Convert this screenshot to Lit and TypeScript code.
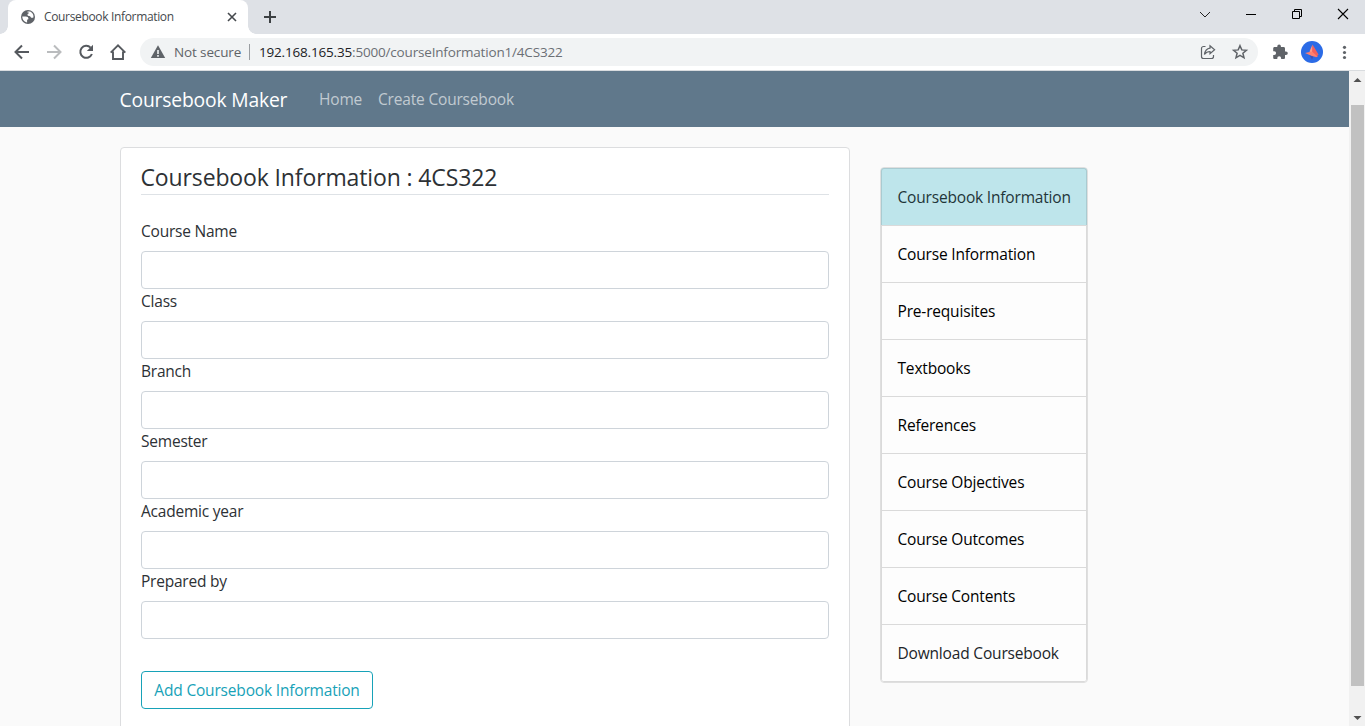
import { LitElement, html, css, svg } from "lit";
import { customElement } from "lit/decorators.js";
import { classMap } from "lit/directives/class-map.js";

const FIELDS = ["Course Name", "Class", "Branch", "Semester", "Academic year", "Prepared by"];
const SECTIONS = [
  "Coursebook Information",
  "Course Information",
  "Pre-requisites",
  "Textbooks",
  "References",
  "Course Objectives",
  "Course Outcomes",
  "Course Contents",
  "Download Coursebook",
];

const icon = (size: number, body: unknown, box = 24) =>
  html`<svg width=${size} height=${size} viewBox="0 0 ${box} ${box}">${body}</svg>`;

@customElement("browser-bar")
class BrowserBar extends LitElement {
  static styles = css`
    :host { display: block; color: #5f6368; font-family: "Open Sans", "Noto Sans", sans-serif; font-weight: 400; }
    svg { display: block; flex: none; }
    .strip { height: 34px; background: #dee1e6; display: flex; }
    .tab { position: relative; width: 240px; margin-left: 8px; background: #fff; border-radius: 8px 8px 0 0; display: flex; align-items: center; box-sizing: border-box; padding: 0 8px 0 12px; }
    .tab::before, .tab::after { content: ""; position: absolute; bottom: 0; width: 8px; height: 8px; }
    .tab::before { left: -8px; background: radial-gradient(circle at 0 0, transparent 7.5px, #fff 8px); }
    .tab::after { right: -8px; background: radial-gradient(circle at 100% 0, transparent 7.5px, #fff 8px); }
    .title { margin-left: 8px; flex: 1; font-size: 12px; color: #45494d; line-height: 34px; white-space: nowrap; letter-spacing: -0.34px; }
    .new { margin: 8px 0 0 13px; }
    .window { margin-left: auto; display: flex; height: 28px; align-items: center; margin-right: -1px; }
    .window svg { width: 46px; }
    .tools { height: 36px; background: #fff; display: flex; align-items: center; border-bottom: 1px solid #d9dcdf; }
    .nav { display: flex; gap: 12px; padding: 0 12px; }
    .address { height: 28px; flex: 1; background: #f1f3f4; border-radius: 14px; display: flex; align-items: center; font-size: 13.5px; white-space: nowrap; padding: 0 8px 0 8px; }
    .insecure { margin-left: 6px; width: 75px; letter-spacing: -0.13px; }
    .url { border-left: 1px solid #9a9da1; height: 16px; line-height: 16px; padding-left: 9px; flex: 1; color: #6b6f74; letter-spacing: -0.18px; }
    .host { color: #202124; }
    .share { margin-right: 12px; }
    .right { display: flex; align-items: center; padding: 0 11px 0 12px; }
    .avatar { margin: 0 11px 0 11px; }
  `;
  render() {
    return html`
      <div class="strip">
        <div class="tab">
          ${icon(16, svg`<circle cx="8" cy="8" r="7" fill="#5f6368"/><path d="M2.300 7.600h3.500c1.600 0 2.600.8 2.600 1.900 0 .8-.5 1.200-1.300 1.200v2.800C4.500 13.200 2.300 11 2.300 7.600Z" fill="#fff"/><path d="M7.500 2.500h2.700c1.500.7 2.700 2 3.100 3.600l.2 2.200c-.9.9-2.500.7-2.900-.4-.2-.7-1-.9-1.800-.9-.9 0-1.300-.5-1.300-1.200s.6-1.200 1.300-1.200V3.500H7.500Z" fill="#fff"/>`, 16)}
          <span class="title">Coursebook Information</span>
          ${icon(16, svg`<path d="m4 4 8 8m0-8-8 8" stroke="#45494d" stroke-width="1.6"/>`, 16)}
        </div>
        <div class="new">${icon(18, svg`<path d="M9 3v12M3 9h12" stroke="#3c4043" stroke-width="2"/>`, 18)}</div>
        <div class="window">
          <svg height="16" viewBox="0 0 46 16"><path d="m18 6 5 5 5-5" fill="none" stroke="#222" /></svg>
          <svg height="16" viewBox="0 0 46 16"><path d="M18 8.5h10" stroke="#000" /></svg>
          <svg height="16" viewBox="0 0 46 16"><path d="M18.5 5.500h7v7h-7zM20.500 5.500v-2h7v7h-2" fill="none" stroke="#000" /></svg>
          <svg height="16" viewBox="0 0 46 16"><path d="m18 3 10 10m0-10L18 13" stroke="#000" stroke-width="1.1" /></svg>
        </div>
      </div>
      <div class="tools">
        <div class="nav">
          ${icon(20, svg`<path d="M17 10H4M10 3.500 3.500 10l6.500 6.500" fill="none" stroke="#55595e" stroke-width="2"/>`, 20)}
          ${icon(20, svg`<path d="M3 10h13M10 3.500l6.500 6.500-6.500 6.500" fill="none" stroke="#babcbe" stroke-width="2"/>`, 20)}
          ${icon(20, svg`<path d="M14.600 5.600A6 6 0 1 0 15.900 12" fill="none" stroke="#55595e" stroke-width="2"/><path d="M17 2.800V9h-6.200Z" fill="#55595e"/>`, 20)}
          ${icon(20, svg`<path d="M2.700 10.600 10 3.300l7.300 7.300M5 9.500V17h10V9.500" fill="none" stroke="#55595e" stroke-width="1.900"/>`, 20)}
        </div>
        <div class="address">
          ${icon(20, svg`<path d="M10 3.200 17.200 16H2.800Z" fill="#5f6368"/><path d="M10 8v4M10 13v1.700" stroke="#f1f3f4" stroke-width="1.600"/>`, 20)}
          <span class="insecure">Not secure</span>
          <span class="url"><span class="host">192.168.165.35</span>:5000/courseInformation1/4CS322</span>
          <span class="share">${icon(20, svg`<path d="M7.500 4.500H5.500A2 2 0 0 0 3.500 6.500v8A2 2 0 0 0 5.500 16.500h8A2 2 0 0 0 15.500 14.500v-1.500" fill="none" stroke="#5f6368" stroke-width="1.200"/><path d="M12 3.800 16.600 7.800 12 11.800V9.500C9.800 9.500 8 10.300 6.400 12.500 7 8.800 9 6.500 12 6.100Z" fill="none" stroke="#5f6368" stroke-width="1.200"/>`, 20)}</span>
          ${icon(20, svg`<path d="m10 3.700 1.800 4.200 4.600.4-3.500 3 1.100 4.500-4-2.400-4 2.400 1.100-4.500-3.500-3 4.600-.4Z" fill="none" stroke="#5f6368" stroke-width="1.500"/>`, 20)}
        </div>
        <div class="right">
          ${icon(20, svg`<path d="M16 9.500H15V6.500c0-.8-.6-1.400-1.400-1.400h-2.700V4.300a1.800 1.800 0 0 0-3.600 0v.8H4.600c-.8 0-1.400.6-1.400 1.400v2.700h1a1.900 1.900 0 0 1 0 3.800h-1v2.700c0 .8.600 1.400 1.400 1.400h2.700v-1a1.900 1.900 0 0 1 3.800 0v1h2.500c.8 0 1.400-.6 1.400-1.400v-2.600h1a1.800 1.800 0 0 0 0-3.600Z" fill="#5f6368"/>`, 20)}
          <div class="avatar">${icon(22, svg`<circle cx="11" cy="11" r="11" fill="#2b6be6"/><path d="M11.500 3.500 8.500 10.500 12 13Z" fill="#ff9a88"/><path d="M11.500 3.500 17.500 13.500 15 16.500 11 12Z" fill="#f4605c"/><path d="m4 12 7-1.500 6 5.500-5-.5Z" fill="#ff8071"/><path d="m8.500 14.500 2.500 4 1.500-3Z" fill="#3f4fb8"/>`, 22)}</div>
          ${icon(20, svg`<g fill="#5f6368"><circle cx="10.500" cy="5.300" r="1.600"/><circle cx="10.500" cy="10.500" r="1.600"/><circle cx="10.500" cy="15.500" r="1.600"/></g>`, 20)}
        </div>
      </div>`;
  }
}

@customElement("app-root")
class AppRoot extends LitElement {
  static styles = css`
    :host { display: flex; flex-direction: column; height: 726px; overflow: hidden; font: 15.5px/24px "Open Sans", "Noto Sans", sans-serif; letter-spacing: -0.18px; color: #2d3135; background: #fafafa; }
    .view { flex: 1; min-height: 0; display: flex; }
    .page { flex: 1; overflow: hidden; }
    .navbar { height: 56px; background: #60788b; display: flex; align-items: center; padding: 0 0 0 119.5px; white-space: nowrap; box-sizing: border-box; }
    .brand { width: 199.5px; font-size: 19.3px; color: #fff; letter-spacing: -0.17px; padding-top: 2px; }
    .link { color: #c1cad1; margin-right: 16px; }
    .home { width: 43px; }
    .content { display: flex; align-items: flex-start; padding: 20px 0 0 120px; }
    .card { width: 730px; height: 640px; box-sizing: border-box; background: #fff; border: 1px solid #dcdddf; border-radius: 4px; padding: 16px 20px; }
    .heading { margin: 0 0 24px; height: 30px; line-height: 27px; font-weight: 400; font-size: 23px; border-bottom: 1px solid #dee2e6; letter-spacing: -0.13px; text-indent: -0.5px; }
    .heading { box-sizing: content-box; }
    .label { display: block; height: 24px; margin-bottom: 8px; letter-spacing: -0.22px; }
    .input { display: block; width: 100%; height: 38px; box-sizing: border-box; border: 1px solid #ced4da; border-radius: 4px; background: #fff; padding: 6px 12px; }
    .submit { margin-top: 32px; width: 232px; height: 38px; border: 1px solid #17a2b8; border-radius: 4px; background: #fff; color: #17a2b8; font: inherit; letter-spacing: inherit; padding: 0; white-space: nowrap; }
    .menu { margin: 20px 0 0 30px; width: 208px; box-sizing: border-box; border: 1px solid #dfdfdf; border-radius: 4px; background: #fff; }
    .list { border: 1px solid #dadada; border-radius: 3px; }
    .item { height: 56px; line-height: 56px; padding-left: 15.5px; border-top: 1px solid #dadada; color: #000; white-space: nowrap; background: #fdfdfd; }
    .item:first-child { height: 57px; line-height: 56px; margin: -1px -1px 0; padding-left: 15.5px; border: 1px solid #a9cbd1; border-bottom: 0; border-radius: 3px 3px 0 0; box-sizing: border-box; }
    .item:last-child { border-radius: 0 0 2px 2px; }
    .active { background: #bee5eb; color: #1f3539; }
    .last { color: #212529; }
    .scroll { width: 16px; background: #f1f1f1; display: flex; flex-direction: column; align-items: center; }
    .scroll svg { display: block; flex: none; }
    .thumb { width: 13px; height: 581px; background: #c1c1c1; margin: 17px 0 auto 1px; }
  `;
  render() {
    return html`
      <browser-bar></browser-bar>
      <div class="view">
        <div class="page">
          <div class="navbar">
            <span class="brand">Coursebook Maker</span>
            <span class="link home">Home</span>
            <span class="link">Create Coursebook</span>
          </div>
          <div class="content">
            <div class="card">
              <h4 class="heading">Coursebook Information : 4CS322</h4>
              ${FIELDS.map((f) => html`<label class="label">${f}</label><input class="input" />`)}
              <button class="submit">Add Coursebook Information</button>
            </div>
            <div class="menu"><div class="list">
              ${SECTIONS.map((s, i) => html`<div class=${classMap({ item: true, active: i === 0, last: i === 8 })}>${s}</div>`)}
            </div></div>
          </div>
        </div>
        <div class="scroll">
          <svg width="16" height="17" viewBox="0 0 16 17"><path d="m4.500 11 4-4 4 4Z" fill="#505050" /></svg>
          <div class="thumb"></div>
          <svg width="16" height="17" viewBox="0 0 16 17"><path d="m4.500 7 4 4 4-4Z" fill="#505050" /></svg>
        </div>
      </div>`;
  }
}
